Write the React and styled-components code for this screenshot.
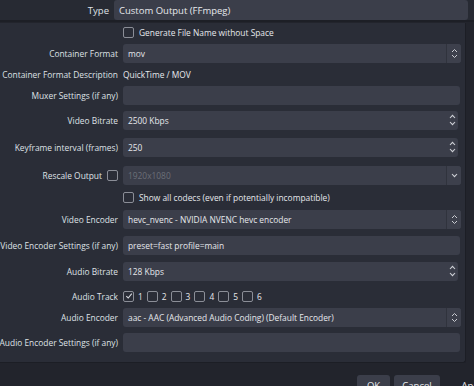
import React from "react";
import styled, { createGlobalStyle } from "styled-components";

const Global = createGlobalStyle`
  html, body { margin: 0; padding: 0; }
  body {
    background: #22242c;
    font-family: "Open Sans", "Noto Sans", sans-serif;
    font-size: 8.4px;
    color: #e2e4e9;
    width: 474px;
    height: 386px;
    overflow: hidden;
  }
`;

const Page = styled.div`
  width: 474px;
  height: 386px;
  display: flex;
  flex-direction: column;
  overflow: hidden;
`;

const TopRow = styled.div`
  display: grid;
  grid-template-columns: 109px 354px;
  column-gap: 5px;
  align-items: center;
  height: 21px;
  background: #272a33;
  border-bottom: 2px solid #1d1f26;
  font-size: 9.5px;
`;

const Panel = styled.div`
  margin-top: 1px;
  width: 465px;
  background: #2a2d37;
  border-right: 1px solid #1c1e25;
  border-bottom: 1px solid #1c1e25;
  border-radius: 0 0 3px 0;
  padding-bottom: 5px;
  display: flex;
  flex-direction: column;
`;

const Row = styled.div`
  display: grid;
  grid-template-columns: 118px 338px;
  column-gap: 5px;
  align-items: center;
  height: ${(p) => p.$h}px;
`;

const Label = styled.div`
  min-width: 0;
  white-space: nowrap;
  color: #dfe1e6;
  display: flex;
  justify-content: flex-end;
  align-items: center;
  gap: 5px;
`;

const Field = styled.div`
  height: ${(p) => p.$h || 19}px;
  width: ${(p) => p.$w || 338}px;
  box-sizing: border-box;
  background: #3b3e4a;
  border-radius: 3px;
  display: flex;
  align-items: center;
  color: ${(p) => (p.$disabled ? "#6c6f78" : "#e6e8ec")};
  overflow: hidden;
  white-space: nowrap;
`;

const FieldText = styled.span`
  flex: 1;
  padding-left: 5px;
`;

const DropButton = styled.div`
  width: 14px;
  align-self: stretch;
  border-left: 1px solid #30333d;
  display: flex;
  align-items: center;
  justify-content: center;
  background: #3d404c;
`;

const SpinArrows = styled.div`
  width: 12px;
  display: flex;
  flex-direction: column;
  align-items: center;
  justify-content: center;
  gap: 2px;
`;

const PlainText = styled.div`
  color: #e6e8ec;
  white-space: nowrap;
`;

const CheckRow = styled.label`
  display: flex;
  align-items: center;
  gap: 5px;
  white-space: nowrap;
  color: #e6e8ec;
`;

const Box = styled.span`
  width: 9px;
  height: 9px;
  border: 1px solid #8b8e97;
  border-radius: 2px;
  display: inline-flex;
  align-items: center;
  justify-content: center;
  flex: none;
`;

const Tracks = styled.div`
  display: flex;
  align-items: center;
  gap: 4px;
`;

const Track = styled.span`
  display: flex;
  align-items: center;
  gap: 4px;
  color: #e6e8ec;
`;

const Footer = styled.div`
  flex: 1;
  display: flex;
  justify-content: flex-end;
  align-items: flex-start;
  gap: 4px;
  padding-top: 12px;
  margin-right: -20px;
  font-size: 9.5px;
`;

const Button = styled.div`
  width: ${(p) => p.$w}px;
  height: 20px;
  background: ${(p) => (p.$flat ? "transparent" : "#3b3e4a")};
  border-radius: 3px;
  display: flex;
  justify-content: center;
  align-items: center;
  color: #e6e8ec;
  margin-left: ${(p) => p.$ml || 0}px;
`;

const UpDown = () => (
  <svg width="7" height="11" viewBox="0 0 7 11">
    <path d="M1 4 L3.5 1.5 L6 4" fill="none" stroke="#c9cbd1" strokeWidth="1" />
    <path d="M1 7 L3.5 9.5 L6 7" fill="none" stroke="#c9cbd1" strokeWidth="1" />
  </svg>
);

const Up = () => (
  <svg width="7" height="5" viewBox="0 0 7 5">
    <path d="M1 4 L3.5 1.3 L6 4" fill="none" stroke="#d0d2d8" strokeWidth="1.1" />
  </svg>
);
const Down = () => (
  <svg width="7" height="5" viewBox="0 0 7 5">
    <path d="M1 1 L3.5 3.7 L6 1" fill="none" stroke="#d0d2d8" strokeWidth="1.1" />
  </svg>
);

const Check = ({ checked }) => (
  <Box>
    {checked && (
      <svg width="8" height="8" viewBox="0 0 8 8">
        <path d="M1.3 4.2 L3.2 6 L6.8 1.6" fill="none" stroke="#d6d8de" strokeWidth="1.1" />
      </svg>
    )}
  </Box>
);

const Combo = ({ children, w, disabled, single }) => (
  <Field $w={w} $disabled={disabled}>
    <FieldText>{children}</FieldText>
    <DropButton>{single ? <Down /> : <UpDown />}</DropButton>
  </Field>
);

const Spin = ({ children }) => (
  <Field $w={335}>
    <FieldText>{children}</FieldText>
    <SpinArrows>
      <Up />
      <Down />
    </SpinArrows>
  </Field>
);

const Edit = ({ children }) => (
  <Field $w={337}>
    <FieldText>{children}</FieldText>
  </Field>
);

export default function App() {
  return (
    <Page>
      <Global />
      <TopRow>
        <Label>Type</Label>
        <Field $w={354} $h={20}>
          <FieldText>Custom Output (FFmpeg)</FieldText>
        </Field>
      </TopRow>
      <Panel>
        <Row $h={18}>
          <span />
          <CheckRow><Check /> Generate File Name without Space</CheckRow>
        </Row>
        <Row $h={24}>
          <Label>Container Format</Label>
          <Combo>mov</Combo>
        </Row>
        <Row $h={18}>
          <Label>Container Format Description</Label>
          <PlainText>QuickTime / MOV</PlainText>
        </Row>
        <Row $h={24}>
          <Label>Muxer Settings (if any)</Label>
          <Edit />
        </Row>
        <Row $h={26}>
          <Label>Video Bitrate</Label>
          <Spin>2500 Kbps</Spin>
        </Row>
        <Row $h={28}>
          <Label>Keyframe interval (frames)</Label>
          <Spin>250</Spin>
        </Row>
        <Row $h={28}>
          <Label>
            <span>Rescale Output</span>
            <Check />
          </Label>
          <Combo disabled single>1920x1080</Combo>
        </Row>
        <Row $h={16}>
          <span />
          <CheckRow><Check /> Show all codecs (even if potentially incompatible)</CheckRow>
        </Row>
        <Row $h={28}>
          <Label>Video Encoder</Label>
          <Combo>hevc_nvenc - NVIDIA NVENC hevc encoder</Combo>
        </Row>
        <Row $h={24}>
          <Label>Video Encoder Settings (if any)</Label>
          <Edit>preset=fast profile=main</Edit>
        </Row>
        <Row $h={28}>
          <Label>Audio Bitrate</Label>
          <Spin>128 Kbps</Spin>
        </Row>
        <Row $h={22}>
          <Label>Audio Track</Label>
          <Tracks>
            {[1, 2, 3, 4, 5, 6].map((n) => (
              <Track key={n}>
                <Check checked={n === 1} />
                {n}
              </Track>
            ))}
          </Tracks>
        </Row>
        <Row $h={20}>
          <Label>Audio Encoder</Label>
          <Combo>aac - AAC (Advanced Audio Coding) (Default Encoder)</Combo>
        </Row>
        <Row $h={30}>
          <Label>Audio Encoder Settings (if any)</Label>
          <Edit />
        </Row>
      </Panel>
      <Footer>
        <Button $w={33}>OK</Button>
        <Button $w={46}>Cancel</Button>
        <Button $w={40} $flat $ml={10}>Apply</Button>
      </Footer>
    </Page>
  );
}
